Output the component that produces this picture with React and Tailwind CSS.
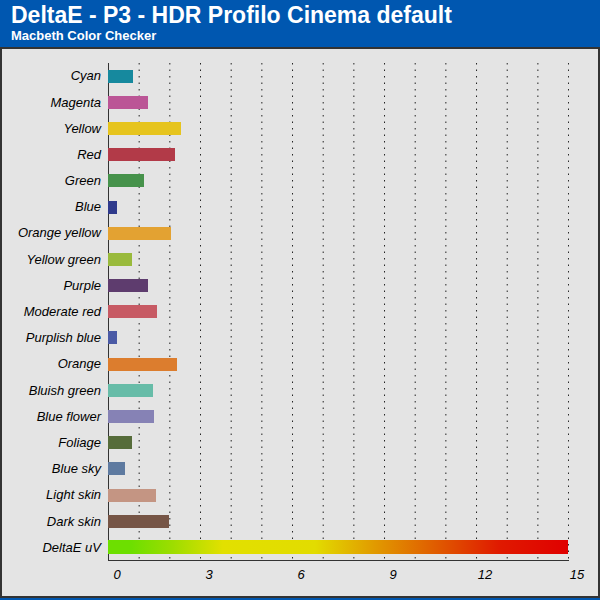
const rows=[["Cyan",0.82,"#16899e"],["Magenta",1.3,"#bb5596"],["Yellow",2.38,"#e6c41e"],["Red",2.18,"#b23a48"],["Green",1.17,"#46924b"],["Blue",0.29,"#2f3a8c"],["Orange yellow",2.05,"#e3a232"],["Yellow green",0.78,"#99ba3c"],["Purple",1.3,"#5e3c6e"],["Moderate red",1.6,"#c75a64"],["Purplish blue",0.29,"#4a5aa5"],["Orange",2.25,"#dc7d2e"],["Bluish green",1.47,"#67bca8"],["Blue flower",1.5,"#8682b5"],["Foliage",0.78,"#566c3a"],["Blue sky",0.55,"#5e7aa0"],["Light skin",1.57,"#c49583"],["Dark skin",2.0,"#765546"]];
const F={fontFamily:'"Liberation Sans",Arial,sans-serif'};
export default function App(){
return <div className="w-[600px] h-[600px] bg-[#0057b0] flex flex-col" style={F}>
<div className="h-[47px] px-[11px] pt-[4px] text-white font-bold leading-none">
<div className="text-[23px]">DeltaE - P3 - HDR Profilo Cinema default</div>
<div className="text-[13px] mt-[2px]">Macbeth Color Checker</div>
</div>
<div className="flex-1 mx-0 mb-[2px] bg-[#e4e4e4] border-2 border-[#333] flex flex-col">
<div className="flex mt-[14px]">
<div className="w-[106px] flex flex-col">
{[...rows,["DeltaE uV"]].map(r=><div key={r[0]} className="h-[26.2px] flex items-center justify-end pr-[7px] italic text-[13px] text-black">{r[0]}</div>)}
</div>
<div className="relative w-[461px] h-[498px]">
<svg className="absolute inset-0" width="461" height="498">
{Array.from({length:15},(_,i)=><line key={i} x1={0.5+(i+1)*30.67} x2={0.5+(i+1)*30.67} y1="0" y2="498" stroke="#222" strokeDasharray="1.5 5"/>)}
<line x1="0.5" x2="0.5" y1="0" y2="498" stroke="#333"/>
<line x1="0" x2="461" y1="497.5" y2="497.5" stroke="#333"/>
{Array.from({length:20},(_,i)=><line key={i} x1="-4" x2="0" y1={i*26.2+0.5} y2={i*26.2+0.5} stroke="#333"/>)}
{Array.from({length:6},(_,i)=><line key={i} x1={0.5+i*92} x2={0.5+i*92} y1="498" y2="502" stroke="#333"/>)}
</svg>
<div className="relative flex flex-col">
{rows.map(r=><div key={r[0]} className="h-[26.2px] flex items-center"><div className="h-[13px]" style={{width:r[1]*30.67,background:r[2]}}/></div>)}
<div className="h-[26.2px] flex items-center"><div className="h-[14px] w-[460px] bg-[linear-gradient(to_right,#6ddf00_5%,#9ddd00_14%,#e2e000_25%,#e2dc00_45%,#e19a00_58%,#e05800_72%,#e01a00_85%,#e00000_100%)]"/></div>
</div>
</div>
</div>
<div className="relative h-[20px] ml-[106px] italic text-[13px] text-black">
{[0,3,6,9,12,15].map((v,i)=><span key={v} className="absolute top-[4px] -translate-x-1/2" style={{left:9+i*92}}>{v}</span>)}
</div>
</div>
</div>}
